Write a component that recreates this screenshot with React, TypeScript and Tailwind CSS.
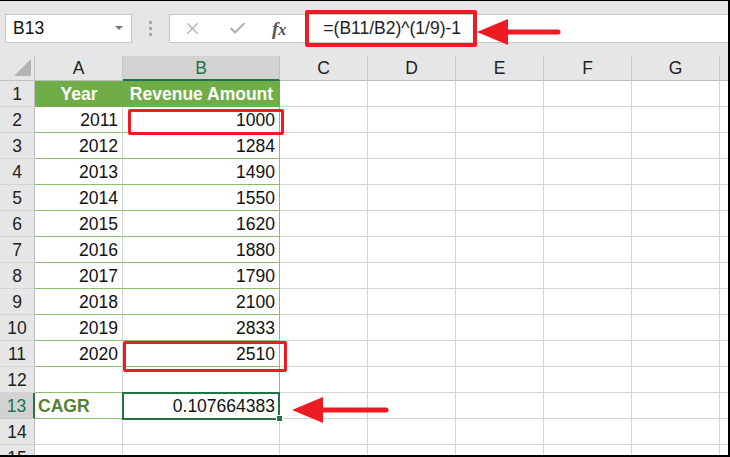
import { X, Check } from 'lucide-react'

const rows: [string, string][] = [
  ['2011', '1000'],
  ['2012', '1284'],
  ['2013', '1490'],
  ['2014', '1550'],
  ['2015', '1620'],
  ['2016', '1880'],
  ['2017', '1790'],
  ['2018', '2100'],
  ['2019', '2833'],
  ['2020', '2510'],
]

const cols = ['A', 'B', 'C', 'D', 'E', 'F', 'G', '']

// plain empty grid cell
function Blank() {
  return <div className="border-r border-b border-[#d4d4d4] bg-white" />
}

function RowHead({ n, active }: { n: number; active?: boolean }) {
  return (
    <div
      className={
        active
          ? 'flex items-center justify-center bg-[#d2d2d2] border-b border-[#c8c8c8] border-r-2 border-r-[#217346] text-[#217346] pt-[2px]'
          : 'flex items-center justify-center bg-[#e6e6e6] border-b border-r border-b-[#d4d4d4] border-r-[#bfbfbf] text-[#222] pt-[2px]'
      }
    >
      {n}
    </div>
  )
}

export default function App() {
  return (
    <div className="relative w-[730px] h-[457px] overflow-hidden bg-[#e6e6e6] font-[family-name:'Liberation_Sans',Arial,sans-serif] text-[17.5px] leading-none text-[#111]">
      {/* formula bar */}
      <div className="flex items-center h-[56px] pl-[5px]">
        <div className="flex items-center justify-between w-[127px] h-[29px] bg-white border border-[#c6c6c6] pl-[7px] pr-[8px]">
          <span className="pt-[2px]">B13</span>
          <span className="w-0 h-0 border-l-[4px] border-r-[4px] border-t-[4px] border-l-transparent border-r-transparent border-t-[#777]" />
        </div>
        <div className="flex flex-col gap-[3px] ml-[17px] mr-[17px]">
          <span className="w-[3px] h-[3px] bg-[#a8a8a8]" />
          <span className="w-[3px] h-[3px] bg-[#a8a8a8]" />
          <span className="w-[3px] h-[3px] bg-[#a8a8a8]" />
        </div>
        <div className="flex items-center flex-1 h-[29px] bg-white border border-r-0 border-[#c6c6c6]">
          <X className="ml-[13px] w-[19px] h-[19px] text-[#b0b0b0]" strokeWidth={1.6} />
          <Check className="ml-[26px] w-[19px] h-[19px] text-[#b0b0b0]" strokeWidth={2.6} />
          <span className="ml-[25px] font-[family-name:'Liberation_Serif',serif] italic font-bold text-[19px] text-[#555]">
            f<span className="text-[16px]">x</span>
          </span>
          <span className="ml-[37px] pt-[2px] text-[#222]">=(B11/B2)^(1/9)-1</span>
        </div>
      </div>

      {/* sheet */}
      <div className="grid grid-cols-[35px_88px_157px_88px_88px_88px_88px_88px_1fr] grid-rows-[25px] auto-rows-[26px]">
        {/* column headers */}
        <div className="flex items-end justify-end pr-[3px] pb-[4px] bg-[#e6e6e6] border-r border-b border-[#bfbfbf]">
          <div className="w-[17px] h-[17px] bg-[#b4b4b4] [clip-path:polygon(100%_0,100%_100%,0_100%)]" />
        </div>
        {cols.map(c =>
          c === 'B' ? (
            <div key={c} className="flex items-center justify-center bg-[#d2d2d2] border-r border-r-[#c0c0c0] border-b-2 border-b-[#217346] text-[#217346] pt-[3px]">
              B
            </div>
          ) : (
            <div key={c || 'h'} className="flex items-center justify-center bg-[#e6e6e6] border-r border-r-[#c8c8c8] border-b border-b-[#bfbfbf] text-[#222] pt-[2px]">
              {c}
            </div>
          ),
        )}

        {/* row 1 – table header */}
        <RowHead n={1} />
        <div className="flex items-center justify-center bg-[#70ad47] text-white font-bold pt-[2px] border-b border-[#70ad47]">
          Year
        </div>
        <div className="flex items-center justify-center bg-[#70ad47] text-white font-bold pt-[2px] border-b border-[#70ad47]">
          Revenue Amount
        </div>
        {[0, 1, 2, 3, 4, 5].map(i => <Blank key={i} />)}

        {/* rows 2-11 */}
        {rows.map(([year, amt], i) => (
          <div key={year} className="contents">
            <RowHead n={i + 2} />
            <div className="flex items-center justify-end pr-[4px] pt-[3px] bg-white border-r border-b border-r-[#d4d4d4] border-b-[#8fbc6e]">
              {year}
            </div>
            <div className="flex items-center justify-end pr-[4px] pt-[3px] bg-white border-r border-b border-[#8fbc6e]">
              {amt}
            </div>
            {[0, 1, 2, 3, 4, 5].map(k => <Blank key={k} />)}
          </div>
        ))}

        {/* row 12 */}
        <RowHead n={12} />
        <div className="bg-white border-r border-b border-r-[#d4d4d4] border-b-[#8fbc6e]" />
        <div className="bg-white border-r border-b border-r-[#8fbc6e] border-b-[#d4d4d4]" />
        {[0, 1, 2, 3, 4, 5].map(k => <Blank key={k} />)}

        {/* row 13 */}
        <RowHead n={13} active />
        <div className="flex items-center pl-[3px] pt-[3px] bg-white border-r border-b border-[#8fbc6e] font-bold text-[#548235]">
          CAGR
        </div>
        <div className="relative flex items-center justify-end pr-[4px] pt-[3px] bg-white border-r border-b border-[#d4d4d4]">
          0.107664383
          <div className="absolute left-[-1px] top-[-1px] w-[158px] h-[28px] border-2 border-[#217346]" />
          <div className="absolute right-[-4px] bottom-[-4px] w-[7px] h-[7px] bg-[#217346] border border-white" />
        </div>
        {[0, 1, 2, 3, 4, 5].map(k => <Blank key={k} />)}

        {/* rows 14-15 */}
        {[14, 15].map(n => (
          <div key={n} className="contents">
            <RowHead n={n} />
            {[0, 1, 2, 3, 4, 5, 6, 7].map(k => <Blank key={k} />)}
          </div>
        ))}
      </div>

      {/* red annotations */}
      <div className="absolute left-[305px] top-[10px] w-[172px] h-[37px] border-[4px] border-[#ed1c24] rounded-[2px] pointer-events-none" />
      <div className="absolute left-[128px] top-[109px] w-[156px] h-[26px] border-[3px] border-[#ed1c24] rounded-[2px] pointer-events-none" />
      <div className="absolute left-[123px] top-[341px] w-[164px] h-[31px] border-[3px] border-[#ed1c24] rounded-[2px] pointer-events-none" />

      <svg className="absolute left-0 top-0 pointer-events-none" width="730" height="457">
        <path d="M477 32 L508 19 L508 45 Z" fill="#ed1c24" />
        <line x1="505" y1="32" x2="558" y2="32" stroke="#ed1c24" strokeWidth="5" strokeLinecap="round" />
        <path d="M292 410 L323 397 L323 423 Z" fill="#ed1c24" />
        <line x1="320" y1="410" x2="386" y2="410" stroke="#ed1c24" strokeWidth="5" strokeLinecap="round" />
      </svg>

      {/* screenshot frame */}
      <div className="absolute inset-0 border-t border-r-2 border-b-2 border-black pointer-events-none" />
    </div>
  )
}
